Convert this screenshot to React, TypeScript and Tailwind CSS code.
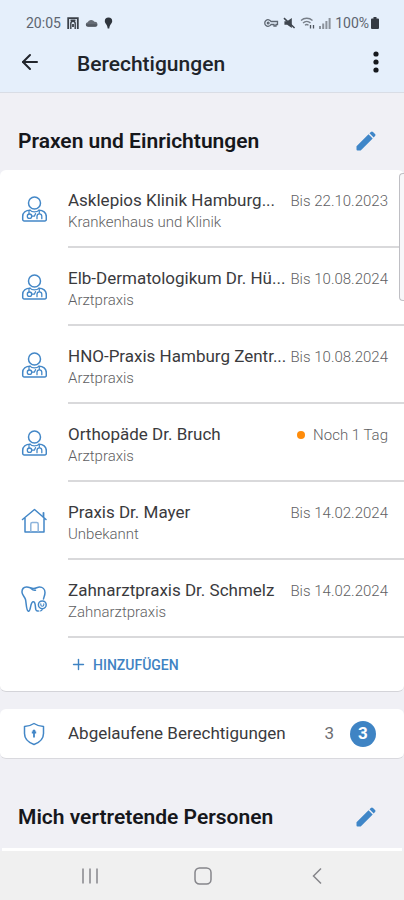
import { ReactNode } from 'react';
import { ArrowLeft, Plus } from 'lucide-react';

type Kind = 'doctor' | 'house' | 'tooth';

interface Permission {
  name: string;
  type: string;
  until: string;
  kind: Kind;
  expiring?: boolean;
}

const permissions: Permission[] = [
  { name: 'Asklepios Klinik Hamburg...', type: 'Krankenhaus und Klinik', until: 'Bis 22.10.2023', kind: 'doctor' },
  { name: 'Elb-Dermatologikum Dr. Hü...', type: 'Arztpraxis', until: 'Bis 10.08.2024', kind: 'doctor' },
  { name: 'HNO-Praxis Hamburg Zentr...', type: 'Arztpraxis', until: 'Bis 10.08.2024', kind: 'doctor' },
  { name: 'Orthopäde Dr. Bruch', type: 'Arztpraxis', until: 'Noch 1 Tag', kind: 'doctor', expiring: true },
  { name: 'Praxis Dr. Mayer', type: 'Unbekannt', until: 'Bis 14.02.2024', kind: 'house' },
  { name: 'Zahnarztpraxis Dr. Schmelz', type: 'Zahnarztpraxis', until: 'Bis 14.02.2024', kind: 'tooth' },
];

function LineIcon({ children }: { children: ReactNode }) {
  return (
    <svg
      width="26"
      height="26"
      viewBox="0 0 26 26"
      fill="none"
      stroke="#4387c7"
      strokeWidth="1.5"
      strokeLinecap="round"
      strokeLinejoin="round"
      aria-hidden="true"
    >
      {children}
    </svg>
  );
}

function KindIcon({ kind }: { kind: Kind }) {
  if (kind === 'house') {
    return (
      <LineIcon>
        <path d="M1.500 11.500 13.500 1.500 25 11.500M4 10v14h19V10" />
        <path d="M22.500 4.800v4" strokeWidth="1.800" />
        <path d="M9.800 23.500V16a1.500 1.500 0 0 1 1.500-1.500h4.400a1.500 1.500 0 0 1 1.500 1.500v7.500" stroke="#8db4dc" />
      </LineIcon>
    );
  }
  if (kind === 'tooth') {
    return (
      <LineIcon>
        <path d="M22.500 13c.3-2 1.500-3.700 1.500-6.500C24 3 21.500 1 18.500 1c-2.200 0-3.500 1.500-6 1.500S8 .8 5.500 1C2.500 1.200.9 3.500 1 6.200c.1 3 2.800 4.400 3.500 7.300.9 3.500.6 11.500 3 11.800 2.500.2 1.500-9.500 4.800-9.500 2.500 0 1.800 5 2.500 7.700.4 1.300 1.300 1.800 2.500 1.500" />
        <path d="M10 2.500c1.500 1.500 3 2 4.500 1.700" />
        <circle cx="21.300" cy="18.800" r="3.900" />
        <path d="M19.800 17.800v1a1.500 1.500 0 0 0 3 0v-1M21.300 22.600c0 1.500-.8 2.400-2.300 2.400" strokeWidth="1.100" />
      </LineIcon>
    );
  }
  return (
    <LineIcon>
      <circle cx="13.500" cy="7" r="6" />
      <path d="M9 14.200C5 14.200 1.700 16.500 1.700 20.500v3a1.500 1.500 0 0 0 1.500 1.500h20.600a1.500 1.500 0 0 0 1.500-1.500v-3c0-4-3.300-6.300-7.300-6.300" />
      <path d="M9 14.200c2 2.300 7 2.300 9 0M8 14.700v3.300M18.300 14.500v3" strokeWidth="1.200" />
      <circle cx="8.500" cy="20.200" r="2.200" strokeWidth="1.300" />
      <path d="M16 22.700v-2.500a2.400 2.400 0 0 1 4.800 0v2.500M11 20.200h2.300l1.200-2.500" strokeWidth="1.300" />
    </LineIcon>
  );
}

function PencilIcon() {
  return (
    <svg width="20" height="20" viewBox="0 0 20 20" fill="currentColor" aria-hidden="true">
      <path d="M.5 15.300 12.500 3.300l4.200 4.200L4.700 19.500H1.500a1 1 0 0 1-1-1ZM13.500 2.300 14.900 1a1.500 1.500 0 0 1 2.100 0l2 2a1.500 1.500 0 0 1 0 2.100l-1.300 1.400Z" />
    </svg>
  );
}

function StatusBar() {
  return (
    <div className="flex h-11 items-center justify-between pt-0.5 pr-[25px] pl-[26px] text-sm text-[#5d6570]">
      <div className="flex items-center gap-1.5">
        <span>20:05</span>
        <svg width="12" height="12" viewBox="0 0 12 12" fill="none" stroke="#3a4048" aria-hidden="true">
          <path d="M1.200 12V1.200h9.600V12" strokeWidth="1.800" />
          <path d="M3.800 12V6.500a2.200 2.200 0 0 1 4.400 0V12M3.500 3.300h5" strokeWidth="1.400" />
          <path d="M6 7v3" strokeWidth="1.800" />
        </svg>
        <svg width="13" height="9" viewBox="0 0 14 10" fill="#666c75" aria-hidden="true">
          <path d="M3 9a2.700 2.700 0 0 1-.3-5.300A4.300 4.300 0 0 1 10.300 3 3 3 0 0 1 11 9Z" />
          <path d="M1 6h12v1.500H1z" fill="#4c525b" />
        </svg>
        <svg width="9" height="12" viewBox="0 0 9 12" fill="#2f353d" aria-hidden="true">
          <path d="M4.500.5A3.700 3.700 0 0 1 8.200 4.200C8.200 6.500 5.500 7.500 5.300 11.500H3.700C3.500 7.500.8 6.500.8 4.200A3.700 3.700 0 0 1 4.500.5Z" />
        </svg>
      </div>
      <div className="flex items-center gap-1">
        <svg width="15" height="10" viewBox="0 0 15 10" fill="none" stroke="#5d6570" strokeWidth="1.300" aria-hidden="true">
          <path d="M7 3.500H13.500v3H12v1.500h-2V6.500H7A3.300 3.300 0 1 1 7 3.500Z" />
          <circle cx="4.200" cy="5" r=".9" />
        </svg>
        <svg width="13" height="12" viewBox="0 0 14 13" aria-hidden="true">
          <path d="M1.500 4.500h3L9.500 1v11L4.500 8.500h-3z" fill="#3f464f" />
          <path d="M1 1.200 12.500 12" stroke="#3f464f" strokeWidth="1.600" />
        </svg>
        <svg width="15" height="12" viewBox="0 0 15 12" fill="none" stroke="#777e88" strokeWidth="1.300" aria-hidden="true">
          <path d="M1 3.500a8.500 8.500 0 0 1 11.500 0M3 6a5.500 5.500 0 0 1 7.500 0M5 8.200a2.800 2.800 0 0 1 3.500 0" />
          <path d="M10.500 8v3.500M13.500 8v3.500" stroke="#4c535c" />
        </svg>
        <svg width="12" height="12" viewBox="0 0 12 12" fill="#8b929b" aria-hidden="true">
          <path d="M0 9h2v3H0zM3.200 6.500h2V12h-2zM6.400 4h2v8h-2zM9.600 1h2v11h-2z" />
        </svg>
        <span className="flex items-center gap-0.5">
          100%
          <svg width="8" height="12" viewBox="0 0 8 12" fill="#343a42" aria-hidden="true">
            <path d="M2.500 0h3v1.500H7a1 1 0 0 1 1 1V11a1 1 0 0 1-1 1H1a1 1 0 0 1-1-1V2.500a1 1 0 0 1 1-1h1.500z" />
          </svg>
        </span>
      </div>
    </div>
  );
}

function SectionHeader({ title }: { title: string }) {
  return (
    <div className="flex items-center justify-between pr-7 pl-[18px]">
      <h2 className="text-[21px] leading-7 font-semibold text-[#16171b]">{title}</h2>
      <button aria-label={`${title} bearbeiten`} className="text-[#3f86c8]">
        <PencilIcon />
      </button>
    </div>
  );
}

function PermissionRow({ item }: { item: Permission }) {
  return (
    <li className="flex h-[78px]">
      <div className="flex w-[68px] shrink-0 items-center justify-center">
        <KindIcon kind={item.kind} />
      </div>
      <div className="flex min-w-0 flex-1 items-start gap-1 border-b-2 border-[#d9d9db] pt-[18px] pr-4">
        <div className="min-w-0 flex-1">
          <p className="truncate text-[17px] leading-6 text-[#3a3a3d]">{item.name}</p>
          <p className="truncate text-[15px] leading-5 font-light text-[#5f5f63]">{item.type}</p>
        </div>
        <div className="flex items-center gap-2 text-[15px] leading-[26px] font-light text-[#5f5f63]">
          {item.expiring && <span className="h-2 w-2 rounded-full bg-[#ff8c0a]" />}
          {item.until}
        </div>
      </div>
    </li>
  );
}

export default function App() {
  return (
    <div className="flex min-h-screen flex-col bg-[#f0f0f5] font-['Roboto',sans-serif]">
      <header className="border-b border-[#d9dde5] bg-[#e5effb]">
        <StatusBar />
        <div className="flex h-12 items-start pt-0.5 pr-3.5 pl-[18px]">
          <button aria-label="Zurück" className="mr-[35px] py-1 text-[#22262c]">
            <ArrowLeft size={24} strokeWidth={2} />
          </button>
          <h1 className="flex-1 text-[21px] leading-9 font-medium text-[#20242a]">Berechtigungen</h1>
          <button aria-label="Mehr" className="py-0.5 text-[#15181d]">
            <svg width="28" height="28" viewBox="0 0 28 28" fill="currentColor" aria-hidden="true">
              <circle cx="14" cy="6" r="2.600" />
              <circle cx="14" cy="14" r="2.600" />
              <circle cx="14" cy="22" r="2.600" />
            </svg>
          </button>
        </div>
      </header>

      <main className="flex-1">
        <div className="pt-[34px] pb-[15px]">
          <SectionHeader title="Praxen und Einrichtungen" />
        </div>
        <section className="relative rounded-md border-b border-[#d4d4d9] bg-white">
          <ul>
            {permissions.map((item) => (
              <PermissionRow key={item.name} item={item} />
            ))}
          </ul>
          <button className="flex h-[53px] items-center gap-1.5 pl-[70px] text-sm font-medium text-[#3f83c3]">
            <Plus size={17} strokeWidth={2} />
            HINZUFÜGEN
          </button>
          {/* edge panel handle */}
          <div className="absolute top-[3px] right-0 h-32 w-[5px] rounded-l border border-r-0 border-[#bfbfc4] bg-[#f7f7f9]" />
        </section>

        <a href="#abgelaufen" className="mt-[17px] flex h-[50px] items-center rounded-md border-b border-[#d9d9de] bg-white pr-7">
          <span className="flex w-[68px] shrink-0 justify-center">
            <svg width="22" height="24" viewBox="0 0 22 24" fill="none" stroke="#4387c7" strokeWidth="1.500" strokeLinejoin="round" aria-hidden="true">
              <path d="M11 1.500c3 2 6 2.900 9.500 3v7c0 5-4 9-9.500 11-5.500-2-9.500-6-9.500-11v-7c3.500-.1 6.500-1 9.500-3Z" />
              <circle cx="11" cy="9" r="1.500" fill="#4387c7" stroke="none" />
              <path d="M11 9v6.500M8.800 10.500h4.400" strokeWidth="1.800" />
            </svg>
          </span>
          <span className="flex-1 text-[17px] text-[#3a3a3d]">Abgelaufene Berechtigungen</span>
          <span className="mr-4 text-[17px] text-[#6d6d71]">3</span>
          <span className="flex h-[26px] w-[26px] items-center justify-center rounded-full bg-[#3f84c4] text-[17px] font-bold text-white">
            3
          </span>
        </a>

        <div className="pt-11 pb-[17px]">
          <SectionHeader title="Mich vertretende Personen" />
        </div>
        <div className="mx-0.5 h-[3px] bg-white" />
      </main>

      <nav className="flex h-[50px] shrink-0 items-center justify-around bg-[#f0f0f0] pr-[30px] pl-[33px]">
        <button aria-label="Letzte Apps">
          <svg width="18" height="18" viewBox="0 0 18 18" stroke="#85858a" strokeWidth="1.500" aria-hidden="true">
            <path d="M2 1.500v15M9 1.500v15M16 1.500v15" />
          </svg>
        </button>
        <button aria-label="Startbildschirm">
          <svg width="18" height="18" viewBox="0 0 18 18" fill="none" stroke="#85858a" strokeWidth="1.500" aria-hidden="true">
            <rect x="1" y="1" width="16" height="16" rx="4.500" />
          </svg>
        </button>
        <button aria-label="Zurück">
          <svg width="18" height="18" viewBox="0 0 18 18" fill="none" stroke="#85858a" strokeWidth="1.500" aria-hidden="true">
            <path d="M13 1.500 5.500 9l7.500 7.500" />
          </svg>
        </button>
      </nav>
    </div>
  );
}
